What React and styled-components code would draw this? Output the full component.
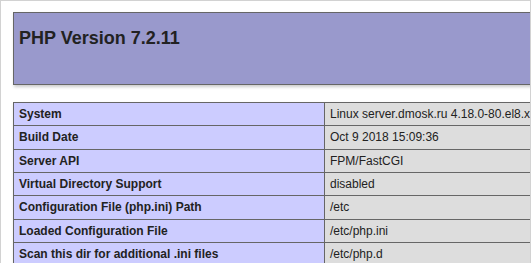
import React from "react";
import styled, { createGlobalStyle } from "styled-components";

const Global = createGlobalStyle`
  html, body { margin: 0; padding: 0; background: #fff; }
  body { font-family: "Liberation Sans", Arial, sans-serif; color: #222; }
`;

const Frame = styled.div`
  box-sizing: border-box;
  width: 531px;
  height: 263px;
  overflow: hidden;
  border: 1px solid #d2d2d2;
  border-bottom: none;
  background: #fff;
  padding: 11px 0 0 12px;
`;

const Table = styled.table`
  border-collapse: collapse;
  width: 934px;
  box-shadow: 1px 2px 3px #ccc;
  margin: 0 0 ${(p) => p.$gap || 0}px 0;
`;

const HeaderCell = styled.td`
  background: #9999cc;
  border: 1px solid #666;
  height: 72px;
  padding: 0 5px;
  vertical-align: top;
  box-sizing: border-box;
`;

const Title = styled.h1`
  margin: 15px 0 0 0;
  font-size: 18px;
  line-height: 21px;
  font-weight: bold;
  color: #222;
`;

const Row = styled.tr`
  height: 23.33px;
`;

const Cell = styled.td`
  border: 1px solid #666;
  font-size: 12px;
  line-height: 14px;
  padding: 4px 5px;
  vertical-align: middle;
  white-space: nowrap;
  color: #222;
  ${(p) =>
    p.$label
      ? `background: #ccccff; width: 300px; font-weight: bold;`
      : `background: #dddddd;`}
`;

const rows = [
  ["System", "Linux server.dmosk.ru 4.18.0-80.el8.x86_64 #1 SMP Tue Jun 4 09:19:46 UTC 2019 x86_64"],
  ["Build Date", "Oct 9 2018 15:09:36"],
  ["Server API", "FPM/FastCGI"],
  ["Virtual Directory Support", "disabled"],
  ["Configuration File (php.ini) Path", "/etc"],
  ["Loaded Configuration File", "/etc/php.ini"],
  ["Scan this dir for additional .ini files", "/etc/php.d"],
];

export default function App() {
  return (
    <>
      <Global />
      <Frame>
        <Table $gap={17}>
          <tbody>
            <tr>
              <HeaderCell>
                <Title>PHP Version 7.2.11</Title>
              </HeaderCell>
            </tr>
          </tbody>
        </Table>
        <Table>
          <tbody>
            {rows.map(([k, v]) => (
              <Row key={k}>
                <Cell $label>{k}</Cell>
                <Cell>{v}</Cell>
              </Row>
            ))}
          </tbody>
        </Table>
      </Frame>
    </>
  );
}
